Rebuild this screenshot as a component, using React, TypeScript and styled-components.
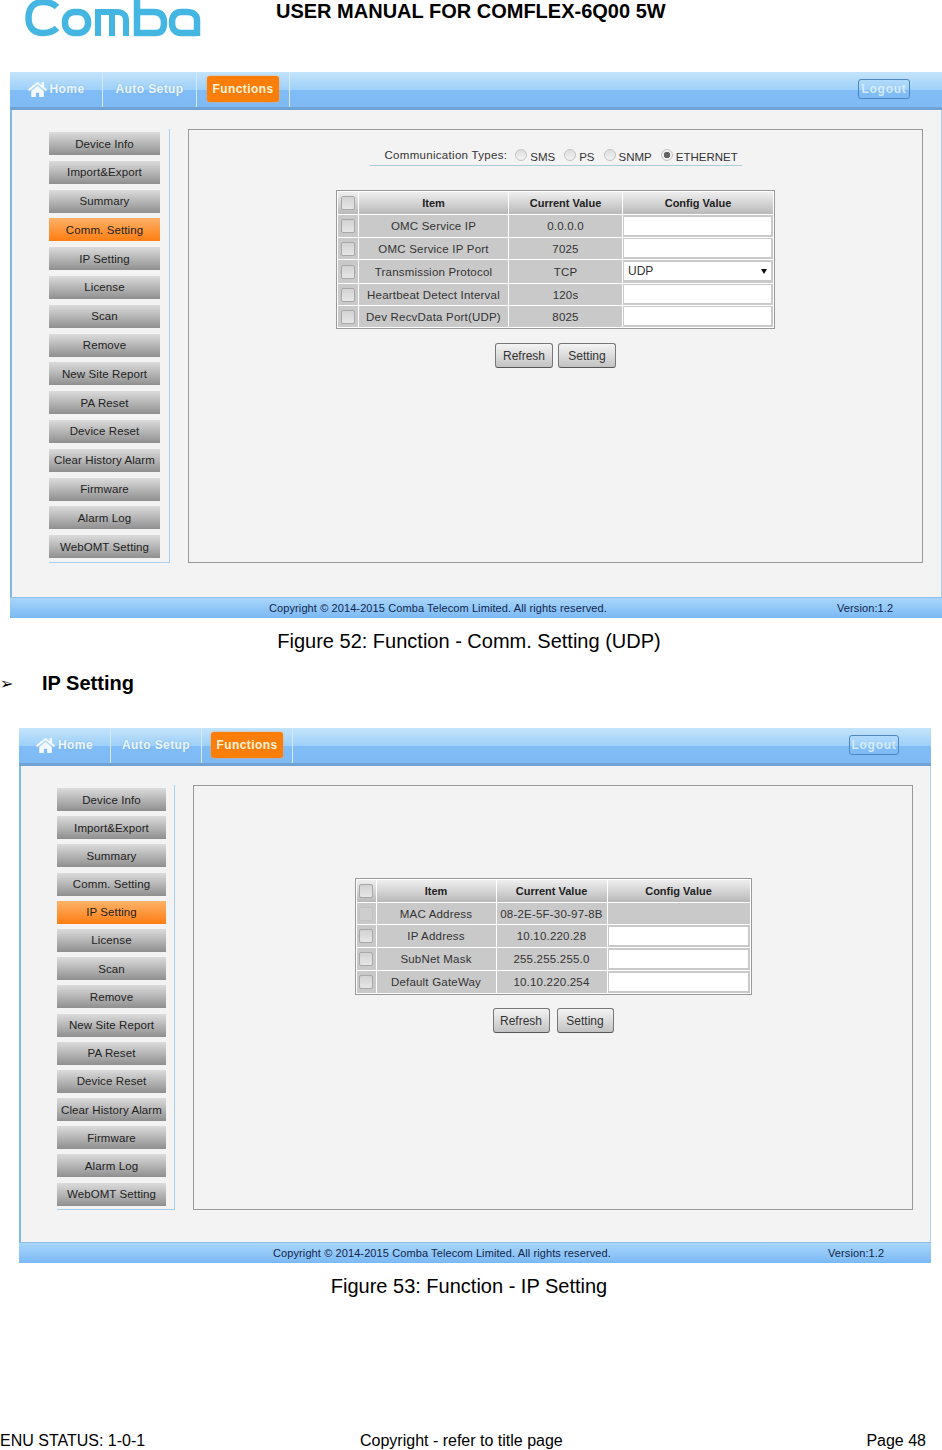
import styled, { createGlobalStyle } from "styled-components";
import { FaHome } from "react-icons/fa";

const GlobalStyle = createGlobalStyle`
  html, body {
    margin: 0;
    background: #fff;
  }
  body {
    font-family: "Liberation Sans", Arial, sans-serif;
    color: #000;
  }
`;

const menuItems = [
  "Device Info",
  "Import&Export",
  "Summary",
  "Comm. Setting",
  "IP Setting",
  "License",
  "Scan",
  "Remove",
  "New Site Report",
  "PA Reset",
  "Device Reset",
  "Clear History Alarm",
  "Firmware",
  "Alarm Log",
  "WebOMT Setting",
];

type Row = {
  item: string;
  current: string;
  config?: "input" | "select" | "none";
  height: number;
  disabled?: boolean;
};

const commRows: Row[] = [
  { item: "OMC Service IP", current: "0.0.0.0", height: 22 },
  { item: "OMC Service IP Port", current: "7025", height: 21 },
  { item: "Transmission Protocol", current: "TCP", config: "select", height: 23 },
  { item: "Heartbeat Detect Interval", current: "120s", height: 21 },
  { item: "Dev RecvData Port(UDP)", current: "8025", height: 21 },
];

const ipRows: Row[] = [
  { item: "MAC Address", current: "08-2E-5F-30-97-8B", config: "none", height: 21, disabled: true },
  { item: "IP Address", current: "10.10.220.28", height: 22 },
  { item: "SubNet Mask", current: "255.255.255.0", height: 22 },
  { item: "Default GateWay", current: "10.10.220.254", height: 22 },
];

const Page = styled.div`
  width: 942px;
  height: 1450px;
  display: flex;
  flex-direction: column;
  overflow: hidden;
`;

const Header = styled.header`
  height: 72px;
  display: flex;
  align-items: flex-start;
  gap: 75px;
  padding-left: 25px;
  box-sizing: border-box;
`;

const Logo = styled.svg`
  width: 176px;
  height: 38px;
  flex: none;
`;

const Title = styled.h1`
  margin: 0;
  font-size: 20px;
  line-height: 23px;
  font-weight: 700;
  white-space: nowrap;
`;

const Screen = styled.section<{ $left: number; $width: number }>`
  margin-left: ${(p) => p.$left}px;
  width: ${(p) => p.$width}px;
  display: flex;
  flex-direction: column;
`;

const NavBar = styled.nav`
  height: 38px;
  display: flex;
  align-items: stretch;
  box-sizing: border-box;
  border-bottom: 3px solid #6fa3d6;
  background: linear-gradient(#c4e4fb 0%, #9ed0f9 50%, #80bcf6 52%, #7fbaf4 100%);
`;

const NavTab = styled.div<{ $width: number }>`
  width: ${(p) => p.$width}px;
  flex: none;
  box-sizing: border-box;
  border-right: 1px solid #d6e9f8;
  display: flex;
  align-items: center;
  justify-content: center;
  gap: 3px;
  color: #eaf5fd;
  font-size: 12px;
  font-weight: 700;
  letter-spacing: 0.4px;
  padding-bottom: 1px;
  text-shadow: 0 0 2px #7fb2e0;
`;

const NavActive = styled.div`
  height: 26px;
  padding: 0 6px;
  display: flex;
  align-items: center;
  border-radius: 3px;
  background: #fb7e0a;
  box-shadow: 0 0 2px #f3a45e;
  color: #fff3d8;
  text-shadow: none;
`;

const Logout = styled.div<{ $width: number }>`
  margin-left: auto;
  align-self: center;
  width: ${(p) => p.$width}px;
  height: 20px;
  margin-right: 32px;
  margin-bottom: 1px;
  box-sizing: border-box;
  border: 1px solid #4f86bd;
  border-radius: 3px;
  display: flex;
  align-items: center;
  justify-content: center;
  color: #d5ebfb;
  font-size: 12px;
  font-weight: 700;
  letter-spacing: 0.7px;
`;

const Body = styled.div<{ $height: number; $padLeft: number; $padRight: number }>`
  height: ${(p) => p.$height}px;
  box-sizing: border-box;
  display: flex;
  align-items: flex-start;
  padding: 19px ${(p) => p.$padRight}px 0 ${(p) => p.$padLeft}px;
  background: #f3f3f3;
  border-left: 2px solid #7db9ec;
  border-right: 1px solid #a9d2f2;
`;

const Sidebar = styled.aside<{ $width: number; $height: number; $gap: number }>`
  flex: none;
  width: ${(p) => p.$width}px;
  height: ${(p) => p.$height}px;
  box-sizing: border-box;
  padding-top: 3px;
  display: flex;
  flex-direction: column;
  gap: ${(p) => p.$gap}px;
  border-right: 1px solid #a8cfee;
  border-bottom: 1px solid #a8cfee;
`;

const MenuButton = styled.div<{ $active?: boolean; $width: number }>`
  width: ${(p) => p.$width}px;
  height: 23px;
  flex: none;
  display: flex;
  align-items: center;
  justify-content: center;
  font-size: 11.5px;
  letter-spacing: 0.1px;
  color: #222;
  white-space: nowrap;
  background: ${(p) =>
    p.$active
      ? "linear-gradient(#fdb269, #ff7d12)"
      : "linear-gradient(#dcdcdc, #8f8f8f)"};
`;

const Content = styled.div<{ $gap: number; $top: number; $height: number }>`
  flex: 1;
  height: ${(p) => p.$height}px;
  margin-left: ${(p) => p.$gap}px;
  padding-top: ${(p) => p.$top}px;
  box-sizing: border-box;
  border: 1px solid #999;
  display: flex;
  flex-direction: column;
  align-items: center;
`;

const TypeRow = styled.div`
  width: 372px;
  height: 36px;
  margin-bottom: 24px;
  box-sizing: border-box;
  border-bottom: 1px solid #a9cdd6;
  padding: 16px 0 0 15px;
  display: flex;
  align-items: center;
  font-size: 11.5px;
  color: #333;
  white-space: nowrap;
`;

const TypeLabel = styled.span`
  margin-right: 8px;
  letter-spacing: 0.3px;
  transform: translateY(-1px);
`;

const Radio = styled.span<{ $checked?: boolean }>`
  width: 12px;
  height: 12px;
  flex: none;
  box-sizing: border-box;
  margin: -2px 3px 0 0;
  border-radius: 50%;
  border: 1px solid #c4c4c4;
  background: ${(p) =>
    p.$checked
      ? "radial-gradient(circle, #666 0 3px, #eee 3.5px)"
      : "linear-gradient(#ddd, #f3f3f3)"};
`;

const RadioText = styled.span`
  margin: 2px 9px 0 0;
`;

const Table = styled.table<{ $width: number }>`
  width: ${(p) => p.$width}px;
  table-layout: fixed;
  border-collapse: separate;
  border-spacing: 1px;
  background: #fff;
  border: 1px solid #999;
  font-size: 11.5px;
  color: #333;
`;

const HeadCell = styled.th`
  height: 22px;
  padding: 0;
  font-size: 11px;
  font-weight: 700;
  color: #222;
  background: linear-gradient(#efefef, #b9b9b9);
`;

const Cell = styled.td<{ $height: number }>`
  height: ${(p) => p.$height}px;
  padding: 0;
  text-align: center;
  white-space: nowrap;
  letter-spacing: 0.2px;
  background: #c9c9c9;
`;

const ConfigCell = styled.td`
  padding: 1px 2px 2px 1px;
  background: #c9c9c9;
`;

const BoxCheck = styled.span<{ $disabled?: boolean }>`
  display: block;
  width: 12px;
  height: 12px;
  margin: auto;
  border-radius: 2px;
  border: 1px solid ${(p) => (p.$disabled ? "#c2c2c2" : "#a8a8a8")};
  background: ${(p) => (p.$disabled ? "#cecece" : "linear-gradient(#d2d2d2, #e6e6e6)")};
`;

const ConfigInput = styled.input`
  display: block;
  width: 100%;
  height: 100%;
  min-height: 18px;
  margin: 0;
  padding: 0;
  box-sizing: border-box;
  border: 0;
  background: #fff;
`;

const FakeSelect = styled.div`
  height: 18px;
  padding: 0 4px;
  display: flex;
  align-items: center;
  justify-content: space-between;
  background: #fff;
  font-size: 12px;
  color: #333;
`;

const Arrow = styled.span`
  width: 0;
  height: 0;
  border-left: 3px solid transparent;
  border-right: 3px solid transparent;
  border-top: 5px solid #111;
`;

const Actions = styled.div<{ $width: number; $top: number; $gap: number }>`
  display: flex;
  gap: ${(p) => p.$gap}px;
  margin-top: ${(p) => p.$top}px;
`;

const GrayButton = styled.div<{ $width: number }>`
  width: ${(p) => p.$width}px;
  height: 25px;
  box-sizing: border-box;
  border: 1px solid #777;
  border-bottom-color: #555;
  border-radius: 3px;
  display: flex;
  align-items: center;
  justify-content: center;
  font-size: 12px;
  color: #333;
  background: linear-gradient(#f4f4f4, #c2c2c2);
`;

const Footer = styled.footer`
  height: 21px;
  position: relative;
  display: flex;
  align-items: center;
  font-size: 11px;
  letter-spacing: 0.1px;
  color: #12264a;
  box-sizing: border-box;
  border-top: 1px solid #8fc0e6;
  background: linear-gradient(#a9d6fa, #7ab9f6);
`;

const CopyText = styled.span<{ $left: number; $width: number }>`
  margin-left: ${(p) => p.$left}px;
  width: ${(p) => p.$width}px;
  flex: none;
  white-space: nowrap;
`;

const Caption = styled.p<{ $height: number }>`
  margin: 0;
  height: ${(p) => p.$height}px;
  display: flex;
  align-items: center;
  justify-content: center;
  font-size: 20px;
  padding-right: 4px;
`;

const Heading = styled.h2`
  margin: 0 0 26px;
  height: 38px;
  display: flex;
  align-items: center;
  font-size: 20px;
  font-weight: 700;
`;

const HeadingMark = styled.span`
  width: 42px;
  flex: none;
  font-family: "DejaVu Sans", sans-serif;
  font-size: 16px;
  font-weight: 400;
`;

const PageFooter = styled.footer`
  margin-top: auto;
  height: 19px;
  margin-bottom: 0;
  display: grid;
  grid-template-columns: 360px 1fr auto;
  padding-right: 16px;
  font-size: 16px;
  line-height: 19px;
`;

type ScreenConfig = {
  left: number;
  width: number;
  tabs: number[];
  logout: number;
  bodyHeight: number;
  padLeft: number;
  padRight: number;
  sideWidth: number;
  sideHeight: number;
  menuWidth: number;
  menuGap: number;
  active: string;
  contentGap: number;
  contentHeight: number;
  contentTop: number;
  tableWidth: number;
  cols: number[];
  rows: Row[];
  showTypes?: boolean;
  actionTop: number;
  actionWidth: number;
  actionGap: number;
  copyLeft: number;
  copyWidth: number;
};

const commScreen: ScreenConfig = {
  left: 10,
  width: 932,
  tabs: [93, 94, 93],
  logout: 52,
  bodyHeight: 487,
  padLeft: 37,
  padRight: 18,
  sideWidth: 121,
  sideHeight: 434,
  menuWidth: 111,
  menuGap: 5.8,
  active: "Comm. Setting",
  contentGap: 18,
  contentHeight: 434,
  contentTop: 0,
  tableWidth: 438,
  cols: [20, 149, 113, 150],
  rows: commRows,
  showTypes: true,
  actionTop: 14,
  actionWidth: 58,
  actionGap: 5,
  copyLeft: 259,
  copyWidth: 568,
};

const ipScreen: ScreenConfig = {
  left: 19,
  width: 912,
  tabs: [92, 91, 91],
  logout: 50,
  bodyHeight: 476,
  padLeft: 36,
  padRight: 17,
  sideWidth: 118,
  sideHeight: 425,
  menuWidth: 109,
  menuGap: 5.2,
  active: "IP Setting",
  contentGap: 18,
  contentHeight: 425,
  contentTop: 92,
  tableWidth: 396,
  cols: [19, 119, 110, 142],
  rows: ipRows,
  actionTop: 13,
  actionWidth: 57,
  actionGap: 7,
  copyLeft: 254,
  copyWidth: 555,
};

const OmtScreen = ({ config }: { config: ScreenConfig }) => (
  <Screen $left={config.left} $width={config.width}>
    <NavBar>
      <NavTab $width={config.tabs[0]}>
        <FaHome size={19} color="#f4f9fd" />
        Home
      </NavTab>
      <NavTab $width={config.tabs[1]}>Auto Setup</NavTab>
      <NavTab $width={config.tabs[2]}>
        <NavActive>Functions</NavActive>
      </NavTab>
      <Logout $width={config.logout}>Logout</Logout>
    </NavBar>
    <Body
      $height={config.bodyHeight}
      $padLeft={config.padLeft}
      $padRight={config.padRight}
    >
      <Sidebar
        $width={config.sideWidth}
        $height={config.sideHeight}
        $gap={config.menuGap}
      >
        {menuItems.map((label) => (
          <MenuButton
            key={label}
            $width={config.menuWidth}
            $active={label === config.active}
          >
            {label}
          </MenuButton>
        ))}
      </Sidebar>
      <Content
        $gap={config.contentGap}
        $top={config.contentTop}
        $height={config.contentHeight}
      >
        {config.showTypes && (
          <TypeRow>
            <TypeLabel>Communication Types:</TypeLabel>
            <Radio />
            <RadioText>SMS</RadioText>
            <Radio />
            <RadioText>PS</RadioText>
            <Radio />
            <RadioText>SNMP</RadioText>
            <Radio $checked />
            <RadioText>ETHERNET</RadioText>
          </TypeRow>
        )}
        <Table $width={config.tableWidth}>
          <colgroup>
            {config.cols.map((width, i) => (
              <col key={i} width={width} />
            ))}
          </colgroup>
          <thead>
            <tr>
              <HeadCell>
                <BoxCheck />
              </HeadCell>
              <HeadCell>Item</HeadCell>
              <HeadCell>Current Value</HeadCell>
              <HeadCell>Config Value</HeadCell>
            </tr>
          </thead>
          <tbody>
            {config.rows.map((row) => (
              <tr key={row.item}>
                <Cell $height={row.height}>
                  <BoxCheck $disabled={row.disabled} />
                </Cell>
                <Cell $height={row.height}>{row.item}</Cell>
                <Cell $height={row.height}>{row.current}</Cell>
                {row.config === "none" ? (
                  <Cell $height={row.height} />
                ) : (
                  <ConfigCell>
                    {row.config === "select" ? (
                      <FakeSelect>
                        UDP
                        <Arrow />
                      </FakeSelect>
                    ) : (
                      <ConfigInput readOnly />
                    )}
                  </ConfigCell>
                )}
              </tr>
            ))}
          </tbody>
        </Table>
        <Actions
          $width={config.actionWidth}
          $top={config.actionTop}
          $gap={config.actionGap}
        >
          <GrayButton $width={config.actionWidth}>Refresh</GrayButton>
          <GrayButton $width={config.actionWidth}>Setting</GrayButton>
        </Actions>
      </Content>
    </Body>
    <Footer>
      <CopyText $left={config.copyLeft} $width={config.copyWidth}>
        Copyright © 2014-2015 Comba Telecom Limited. All rights reserved.
      </CopyText>
      <span>Version:1.2</span>
    </Footer>
  </Screen>
);

const App = () => (
  <Page>
    <GlobalStyle />
    <Header>
      <Logo viewBox="0 0 176 38" role="img" aria-label="Comba">
        <g fill="none" stroke="#45b6e2" strokeWidth="6.5">
          <path d="M32 7 C28 3 24 2 18 2 C8 2 3.5 9 3.5 18 C3.5 28 9 33 18 33 C24 33 28 32 32 28" />
          <rect x="40" y="12" width="23" height="21" rx="9.5" />
          <path d="M73 36 V12 H92 C98 12 101 15 101 20 V36 M87 12 V36" strokeWidth="6" />
          <path d="M112 0 V33 H130 C137 33 139 29 139 23 C139 16 136 12 129 12 H112" />
          <path d="M172 36 V20 C172 15 168 12 162 12 H156 C150 12 147 16 147 23 C147 29 150 33 156 33 H172" />
        </g>
      </Logo>
      <Title>USER MANUAL FOR COMFLEX-6Q00 5W</Title>
    </Header>
    <OmtScreen config={commScreen} />
    <Caption $height={46}>Figure 52: Function - Comm. Setting (UDP)</Caption>
    <Heading>
      <HeadingMark>➢</HeadingMark>
      IP Setting
    </Heading>
    <OmtScreen config={ipScreen} />
    <Caption $height={46}>Figure 53: Function - IP Setting</Caption>
    <PageFooter>
      <span>ENU STATUS: 1-0-1</span>
      <span>Copyright - refer to title page</span>
      <span>Page 48</span>
    </PageFooter>
  </Page>
);

export default App;
